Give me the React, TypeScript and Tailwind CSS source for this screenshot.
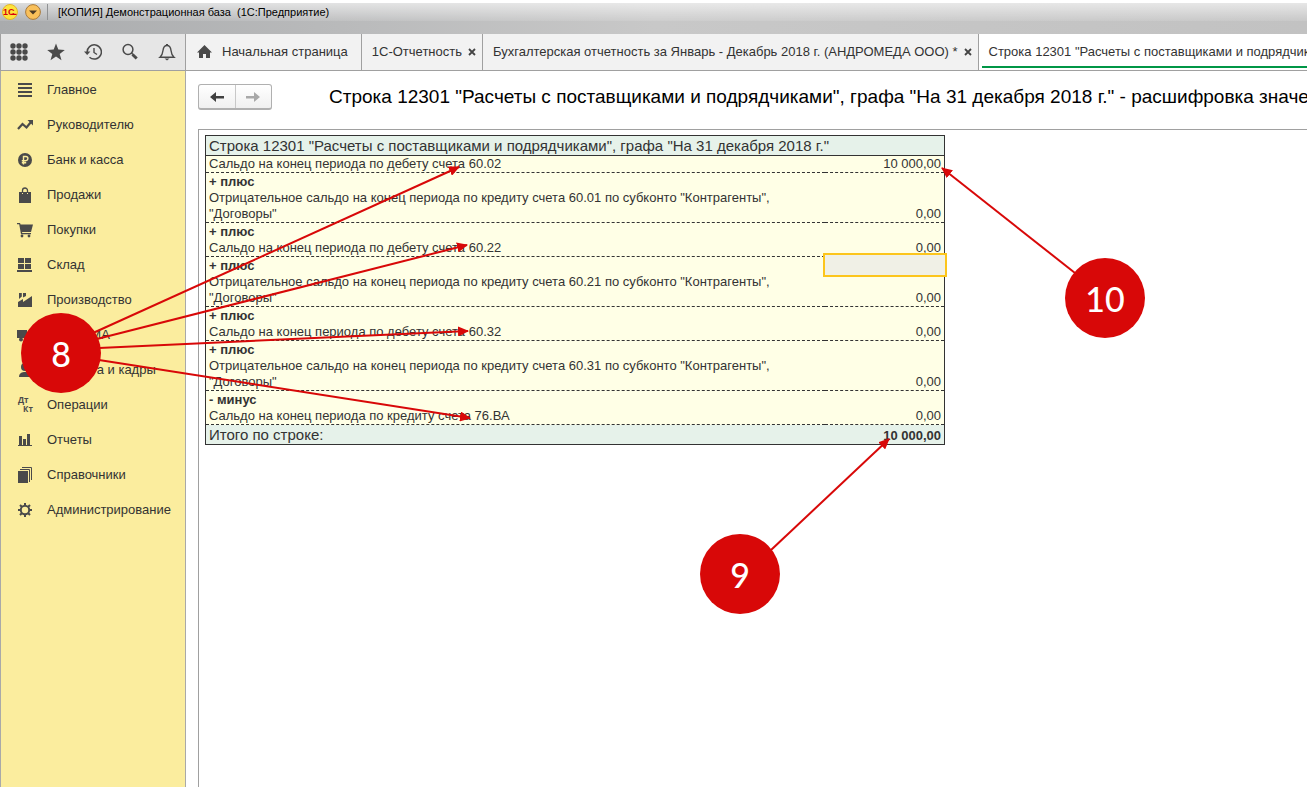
import type { ReactNode } from "react";
import clsx from "clsx";

const menuItems: { title: string; icon: ReactNode }[] = [
  { title: "Главное", icon: <path d="M1 1h14v2H1zM1 5h14v2H1zM1 9h14v2H1zM1 13h14v2H1z" /> },
  {
    title: "Руководителю",
    icon: (
      <>
        <path d="M1 12l4.5-5 4 3.5L14 5" fill="none" stroke="currentColor" strokeWidth="2.2" />
        <path d="M10.5 3H16v5.5z" />
      </>
    ),
  },
  {
    title: "Банк и касса",
    icon: (
      <>
        <circle cx="8" cy="8" r="7" />
        <path d="M6.5 12.5V4.5h2.3a2.1 2.1 0 0 1 0 4.2H4.8M4.8 10.7h4.4" fill="none" stroke="#fbed9e" strokeWidth="1.4" />
      </>
    ),
  },
  {
    title: "Продажи",
    icon: (
      <>
        <path d="M2 5h3v2h1V5h4v2h1V5h3v11H2z" />
        <path d="M5.5 6V3.5a2.5 2.5 0 0 1 5 0V6" fill="none" stroke="currentColor" strokeWidth="1.3" />
      </>
    ),
  },
  {
    title: "Покупки",
    icon: (
      <>
        <path d="M0 1h3l.6 1.5H16l-2 7.5H5l.3 1H14v1.2H4L2.2 2.3H0z" />
        <circle cx="5" cy="14" r="1.4" />
        <circle cx="12" cy="14" r="1.4" />
      </>
    ),
  },
  { title: "Склад", icon: <path d="M1 1h6v5H1zM8 1h6v5H8zM1 7h6v5H1zM8 7h6v5H8zM0 13h15v2H0z" /> },
  { title: "Производство", icon: <path d="M1 15v-5l5-3v3l9-6v11zM2 1h2.8v3.5L2 7zM6 1h3v3L6 5.5z" /> },
  {
    title: "ОС и НМА",
    icon: (
      <>
        <path d="M0 3h10v8H0zM11 5h3l2 3v3h-5z" />
        <circle cx="4" cy="12.5" r="2" />
        <circle cx="12" cy="12.5" r="2" />
      </>
    ),
  },
  {
    title: "Зарплата и кадры",
    icon: (
      <>
        <circle cx="8" cy="5" r="4" />
        <path d="M2 15c0-4 3-5 6-5s6 1 6 5z" />
      </>
    ),
  },
  {
    title: "Операции",
    icon: (
      <g fontFamily="Open Sans, sans-serif" fontWeight="700" fontSize="8">
        <text x="1" y="6">Дт</text>
        <text x="6" y="15">Кт</text>
      </g>
    ),
  },
  { title: "Отчеты", icon: <path d="M1 13h14v1H1zM2 4h3v9H2zM6 7h3v6H6zM10 2h3v11h-3z" /> },
  {
    title: "Справочники",
    icon: (
      <>
        <path d="M1 4h10v12H1z" />
        <path d="M3 2.5h9.5V15M5 .5h9.5V13" fill="none" stroke="currentColor" />
      </>
    ),
  },
  {
    title: "Администрирование",
    icon: (
      <>
        <circle cx="8" cy="8" r="4.2" fill="none" stroke="currentColor" strokeWidth="2" />
        <path
          d="M8 1v3M8 12v3M1 8h3M12 8h3M3 3l2 2M11 11l2 2M3 13l2-2M11 5l2-2"
          stroke="currentColor"
          strokeWidth="2"
        />
      </>
    ),
  },
];

const tools: { label: string; icon: ReactNode }[] = [
  {
    label: "Меню функций",
    icon: (
      <>
        {[3, 9, 15].map((y) => [3, 9, 15].map((x) => <circle key={`${x}-${y}`} cx={x} cy={y} r="2.7" />))}
      </>
    ),
  },
  { label: "Избранное", icon: <path d="M9 .5l2.3 6.1 6.5.3-5.1 4 1.8 6.3L9 13.6l-5.5 3.6 1.8-6.3-5.1-4 6.5-.3z" /> },
  {
    label: "История",
    icon: (
      <>
        <path d="M3.2 9.5A7.1 7.1 0 1 1 5.5 14.2" fill="none" stroke="currentColor" strokeWidth="1.5" />
        <path d="M0 8.5h6.4L3.2 12z" />
        <path d="M10 5v4.5l3 2" fill="none" stroke="currentColor" strokeWidth="1.4" />
      </>
    ),
  },
  {
    label: "Поиск",
    icon: (
      <>
        <circle cx="7" cy="6.5" r="4.9" fill="none" stroke="currentColor" strokeWidth="1.5" />
        <path d="M10.5 10l1.5 1.5" stroke="currentColor" strokeWidth="1.5" />
        <path d="M11.5 11.5l4.2 4" stroke="currentColor" strokeWidth="3" />
      </>
    ),
  },
  {
    label: "Оповещения",
    icon: (
      <>
        <path
          d="M2 14.2c2.3-2 2.7-3.7 3-6.7C5.3 4.5 6.5 2.5 9 2.5s3.7 2 4 5c.3 3 .7 4.7 3 6.7z"
          fill="none"
          stroke="currentColor"
          strokeWidth="1.4"
        />
        <path d="M8 1h2v2H8zM6.5 15.5h5L9 17.5z" />
      </>
    ),
  },
];

const tabs = [
  { title: "1С-Отчетность" },
  { title: "Бухгалтерская отчетность за Январь - Декабрь 2018 г. (АНДРОМЕДА ООО) *" },
];

const lines = [
  { sign: "", text: "Сальдо на конец периода по дебету счета 60.02", value: "10 000,00" },
  {
    sign: "+ плюс",
    text: 'Отрицательное сальдо на конец периода по кредиту счета 60.01 по субконто "Контрагенты", "Договоры"',
    value: "0,00",
  },
  { sign: "+ плюс", text: "Сальдо на конец периода по дебету счета 60.22", value: "0,00" },
  {
    sign: "+ плюс",
    text: 'Отрицательное сальдо на конец периода по кредиту счета 60.21 по субконто "Контрагенты", "Договоры"',
    value: "0,00",
    selected: true,
  },
  { sign: "+ плюс", text: "Сальдо на конец периода по дебету счета 60.32", value: "0,00" },
  {
    sign: "+ плюс",
    text: 'Отрицательное сальдо на конец периода по кредиту счета 60.31 по субконто "Контрагенты", "Договоры"',
    value: "0,00",
  },
  { sign: "- минус", text: "Сальдо на конец периода по кредиту счета 76.ВА", value: "0,00" },
];

const arrows = [
  [93, 333, 459, 167],
  [93, 340, 467, 245],
  [99, 348, 468, 331],
  [99, 360, 470, 418],
  [771, 550, 889, 439],
  [1075, 273, 942, 168],
];

function TitleBar() {
  return (
    <header className="flex h-[34px] flex-col border-t-3 border-white bg-linear-to-r from-[#a9abad] via-[#c8c8c8] to-[#c2c2c2]">
      <div className="flex h-[18px] items-center bg-linear-to-b from-white/60 to-white/10 text-[11px] text-black">
        <svg viewBox="0 0 16 16" className="ml-0.5 size-4" aria-hidden="true">
          <circle cx="8" cy="8" r="7.5" fill="#fde43c" stroke="#e3b52c" />
          <text x="1" y="11" fontSize="9" fontWeight="700" fill="#d8000d" fontFamily="Liberation Sans, sans-serif">
            1С
          </text>
          <path d="M9 10.4h5.5" stroke="#d8000d" strokeWidth="1.2" />
        </svg>
        <button type="button" aria-label="Главное меню" className="ml-[7px]">
          <svg viewBox="0 0 16 16" className="size-4">
            <circle cx="8" cy="8" r="7.4" fill="#f9c05a" stroke="#a87a3c" />
            <path d="M4 6.5h8L8 10.5z" fill="#4b3a24" />
          </svg>
        </button>
        <span className="ml-1.5 h-4 w-px bg-[#8f9193]" />
        <span className="ml-2.5 whitespace-pre">[КОПИЯ] Демонстрационная база  (1С:Предприятие)</span>
      </div>
    </header>
  );
}

function CloseIcon() {
  return (
    <svg viewBox="0 0 8 8" className="size-2">
      <path d="M1 1l6 6M7 1L1 7" stroke="#444" strokeWidth="1.8" />
    </svg>
  );
}

function TabBar() {
  return (
    <nav className="flex min-w-0 flex-1 overflow-hidden bg-[#f2f2f2]">
      <a href="#home" className="flex shrink-0 items-center gap-2.5 border-r border-[#a0a0a0] pr-[13px] pl-[11px]">
        <svg viewBox="0 0 15 14" className="h-3.5 w-[15px] fill-[#4a4a4a]" aria-hidden="true">
          <path d="M7.5 0L15 7.5h-2V13H9V9H6v4H2V7.5H0z" />
        </svg>
        Начальная страница
      </a>
      {tabs.map((tab) => (
        <div key={tab.title} className="flex shrink-0 items-center gap-1.5 border-r border-[#a0a0a0] pr-1.5 pl-2.5">
          <a href="#tab">{tab.title}</a>
          <button type="button" aria-label="Закрыть">
            <CloseIcon />
          </button>
        </div>
      ))}
      <div className="flex min-w-0 flex-1 bg-white pb-0.5 pl-[3px]">
        <a
          href="#line"
          aria-current="page"
          className="flex flex-1 items-center overflow-hidden border-b-2 border-[#009646] pt-1 pl-[7px] whitespace-nowrap"
        >
          Строка 12301 "Расчеты с поставщиками и подрядчиками"
        </a>
      </div>
    </nav>
  );
}

function Sidebar() {
  return (
    <aside className="w-[186px] shrink-0 border-r border-l border-[#a9a9a9] bg-[#fbed9e] pt-px">
      {menuItems.map((item) => (
        <a key={item.title} href="#section" className="flex h-[35px] items-center gap-3.5 pl-4">
          <svg viewBox="0 0 16 16" className="size-4 overflow-visible fill-current text-[#4a4a4a]" aria-hidden="true">
            {item.icon}
          </svg>
          {item.title}
        </a>
      ))}
    </aside>
  );
}

function ReportTable() {
  return (
    <table className="w-[740px] table-fixed border-separate border-spacing-0 border border-[#333] bg-[#ffffe6] text-left leading-4">
      <colgroup>
        <col />
        <col className="w-[119px]" />
      </colgroup>
      <thead className="bg-[#e6f2ea] text-[15px]">
        <tr>
          <th colSpan={2} className="h-5 border-b border-[#333] px-[3px] py-0 font-normal">
            Строка 12301 "Расчеты с поставщиками и подрядчиками", графа "На 31 декабря 2018 г."
          </th>
        </tr>
      </thead>
      {lines.map((line) => (
        <tbody key={line.text}>
          {line.sign && (
            <tr>
              <th scope="rowgroup" className="h-[17px] px-[3px] py-0 font-bold">
                {line.sign}
              </th>
              <td className="relative p-0">
                {line.selected && (
                  <div className="absolute -top-1 -right-[3px] -bottom-[3px] -left-0.5 border-2 border-[#fcc51c] bg-[#f0f0e6]" />
                )}
              </td>
            </tr>
          )}
          <tr>
            <td className="border-b border-dashed border-[#333] px-[3px] py-0">{line.text}</td>
            <td className="border-b border-dashed border-[#333] px-[3px] py-0 text-right align-bottom">{line.value}</td>
          </tr>
        </tbody>
      ))}
      <tfoot className="bg-[#e6f2ea]">
        <tr>
          <th className="h-[19px] px-[3px] py-0 text-[15px] font-normal">Итого по строке:</th>
          <td className="px-[3px] py-0 text-right align-bottom font-bold">10 000,00</td>
        </tr>
      </tfoot>
    </table>
  );
}

function Callout({ label, className }: { label: string; className: string }) {
  return (
    <div
      className={clsx(
        "absolute flex size-20 items-center justify-center rounded-full bg-[#d80808] font-[Lato,sans-serif] text-[34px] font-medium text-white",
        className
      )}
    >
      {label}
    </div>
  );
}

// Numbered callouts with arrows, drawn over the whole window
function Callouts() {
  return (
    <div className="pointer-events-none absolute inset-0 overflow-hidden">
      <svg width="1307" height="787" className="absolute top-0 left-0">
        <defs>
          <marker id="head" markerUnits="userSpaceOnUse" markerWidth="11" markerHeight="10" refX="10" refY="5" orient="auto">
            <path d="M0 0l11 5-11 5z" fill="#d80808" />
          </marker>
        </defs>
        {arrows.map(([x1, y1, x2, y2]) => (
          <line key={`${x2}-${y2}`} x1={x1} y1={y1} x2={x2} y2={y2} stroke="#d80808" strokeWidth="2" markerEnd="url(#head)" />
        ))}
      </svg>
      <Callout label="8" className="top-[313px] left-[21px]" />
      <Callout label="9" className="top-[534px] left-[700px]" />
      <Callout label="10" className="top-[258px] left-[1065px]" />
    </div>
  );
}

export default function App() {
  return (
    <div className="relative flex min-h-screen flex-col bg-white font-['Liberation_Sans',Arial,sans-serif] text-[13px] text-[#333]">
      <TitleBar />
      <div className="flex h-[37px] border-b border-[#a0a0a0]">
        <div className="flex w-[186px] shrink-0 items-center justify-between border-r border-l border-[#a0a0a0] bg-[#e6e6e6] px-[9px]">
          {tools.map((tool) => (
            <button key={tool.label} type="button" aria-label={tool.label}>
              <svg viewBox="0 0 18 18" className="size-[18px] fill-current text-[#4a4a4a]">
                {tool.icon}
              </svg>
            </button>
          ))}
        </div>
        <TabBar />
      </div>
      <div className="flex flex-1">
        <Sidebar />
        <main className="flex min-w-0 flex-1 flex-col pl-3">
          <div className="flex h-[58px] items-center gap-[57px] pb-1.5">
            <div className="flex h-[26px] w-[74px] shrink-0 rounded-[3px] border border-b-2 border-[#b0b0b0] bg-linear-to-b from-white to-[#f0f0f0]">
              <button type="button" aria-label="Назад" className="flex flex-1 items-center justify-center border-r border-[#c8c8c8]">
                <svg viewBox="0 0 14 12" className="h-3 w-3.5 fill-[#404040]">
                  <path d="M0 6l6-5v4h8v2.5H6V11z" />
                </svg>
              </button>
              <button type="button" aria-label="Вперед" className="flex flex-1 items-center justify-center">
                <svg viewBox="0 0 14 12" className="h-3 w-3.5 fill-[#a8a8a8]">
                  <path d="M14 6L8 1v4H0v2.5h8V11z" />
                </svg>
              </button>
            </div>
            <h1 className="min-w-0 flex-1 overflow-hidden text-[19px] whitespace-nowrap text-black">
              Строка 12301 "Расчеты с поставщиками и подрядчиками", графа "На 31 декабря 2018 г." - расшифровка значения
            </h1>
          </div>
          <div className="flex-1 border-t border-l border-[#a0a0a0] pt-[5px] pl-1.5">
            <ReportTable />
          </div>
        </main>
      </div>
      <Callouts />
    </div>
  );
}
